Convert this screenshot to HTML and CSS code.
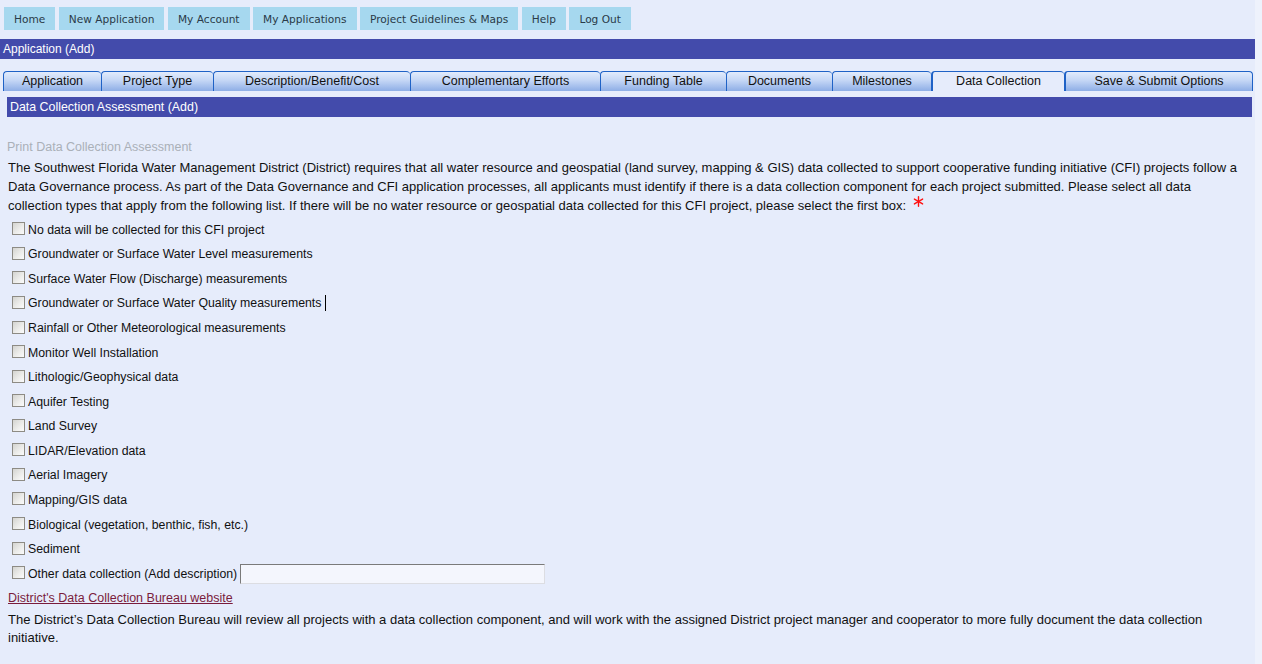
FILE: index.html
```html
<!DOCTYPE html>
<html lang="en">
<head>
  <meta charset="UTF-8">
  <title>Application (Add) – Data Collection</title>
  <link rel="stylesheet" href="styles.css">
</head>
<body>
  <div class="page">

    <nav class="topnav">
      <a href="#">Home</a>
      <a href="#">New Application</a>
      <a href="#">My Account</a>
      <a href="#">My Applications</a>
      <a href="#">Project Guidelines &amp; Maps</a>
      <a href="#">Help</a>
      <a href="#">Log Out</a>
    </nav>

    <div class="titlebar">Application (Add)</div>

    <ul class="tabs">
      <li class="t-app">Application</li>
      <li class="t-type">Project Type</li>
      <li class="t-desc">Description/Benefit/Cost</li>
      <li class="t-comp">Complementary Efforts</li>
      <li class="t-fund">Funding Table</li>
      <li class="t-docs">Documents</li>
      <li class="t-mile">Milestones</li>
      <li class="t-data active">Data Collection</li>
      <li class="t-save">Save &amp; Submit Options</li>
    </ul>

    <div class="content">
      <div class="subbar">Data Collection Assessment (Add)</div>

      <a class="print" href="#">Print Data Collection Assessment</a>

      <p class="intro">The Southwest Florida Water Management District (District) requires that all water resource and geospatial (land survey, mapping &amp; GIS) data collected to support cooperative funding initiative (CFI) projects follow a Data Governance process. As part of the Data Governance and CFI application processes, all applicants must identify if there is a data collection component for each project submitted. Please select all data collection types that apply from the following list. If there will be no water resource or geospatial data collected for this CFI project, please select the first box:
        <svg class="req" width="11" height="11" viewBox="0 0 11 11" aria-label="required">
          <g stroke="#ff1010" stroke-width="1.4" stroke-linecap="round">
            <line x1="5.5" y1="0.8" x2="5.5" y2="10.2"/>
            <line x1="1.4" y1="3.1" x2="9.6" y2="7.9"/>
            <line x1="1.4" y1="7.9" x2="9.6" y2="3.1"/>
          </g>
        </svg>
      </p>

      <div class="checklist">
        <label><input type="checkbox">No data will be collected for this CFI project</label>
        <label><input type="checkbox">Groundwater or Surface Water Level measurements</label>
        <label><input type="checkbox">Surface Water Flow (Discharge) measurements</label>
        <label><input type="checkbox">Groundwater or Surface Water Quality measurements <span class="caret"></span></label>
        <label><input type="checkbox">Rainfall or Other Meteorological measurements</label>
        <label><input type="checkbox">Monitor Well Installation</label>
        <label><input type="checkbox">Lithologic/Geophysical data</label>
        <label><input type="checkbox">Aquifer Testing</label>
        <label><input type="checkbox">Land Survey</label>
        <label><input type="checkbox">LIDAR/Elevation data</label>
        <label><input type="checkbox">Aerial Imagery</label>
        <label><input type="checkbox">Mapping/GIS data</label>
        <label><input type="checkbox">Biological (vegetation, benthic, fish, etc.)</label>
        <label><input type="checkbox">Sediment</label>
        <label class="other"><input type="checkbox">Other data collection (Add description) <input type="text" class="desc"></label>
      </div>

      <a class="bureau" href="#">District's Data Collection Bureau website</a>

      <p class="outro">The District’s Data Collection Bureau will review all projects with a data collection component, and will work with the assigned District project manager and cooperator to more fully document the data collection initiative.</p>
    </div>

  </div>
</body>
</html>
```

FILE: styles.css
```css
:root {
  --page-bg: #e6ecfb;
  --outer-bg: #eef2fc;
  --bar-color: #434bab;
  --nav-bg: #a6d8ef;
  --tab-border: #1f62c6;
  --text-color: #111;
}

body {
  margin: 0;
  padding: 0;
  background-color: var(--outer-bg);
  font-family: "Liberation Sans", Arial, sans-serif;
  font-size: 12px;
  color: var(--text-color);
}

.page {
  width: 1255px;
  min-height: 664px;
  background-color: var(--page-bg);
}

/* top navigation */
.topnav {
  display: flex;
  gap: 3.5px;
  padding: 7px 0 0 4px;
  height: 23px;
}

.topnav a {
  display: flex;
  align-items: center;
  padding: 0 10px;
  background-color: var(--nav-bg);
  color: #2a3a48;
  font-family: "DejaVu Sans", Verdana, sans-serif;
  font-size: 10.6px;
  text-decoration: none;
}

.titlebar {
  margin-top: 9px;
  height: 20px;
  line-height: 20px;
  padding-left: 3px;
  background-color: var(--bar-color);
  color: white;
}

/* tabs */
.tabs {
  display: flex;
  list-style: none;
  margin: 12px 0 0 3px;
  padding: 0;
  height: 20px;
}

.tabs li {
  box-sizing: border-box;
  height: 20px;
  line-height: 18px;
  text-align: center;
  font-size: 12.5px;
  border: 1px solid var(--tab-border);
  border-bottom: none;
  border-right: none;
  border-radius: 4px 4px 0 0;
  background: linear-gradient(to bottom, #e2ecfc 0%, #c4d6f5 45%, #8eaee6 100%);
  color: #111;
}

.tabs li.t-save { border-right: 1px solid var(--tab-border); }

.tabs li.active {
  background: var(--page-bg);
  border-left-width: 2px;
}

.tabs li.active + li { border-left-width: 2px; }

.t-app  { width: 98px; }
.t-type { width: 112px; }
.t-desc { width: 197px; }
.t-comp { width: 190px; }
.t-fund { width: 126px; }
.t-docs { width: 106px; }
.t-mile { width: 99px; }
.t-data { width: 133px; }
.t-save { width: 189px; }

/* main content */
.content {
  padding: 6px 3px 0 7px;
}

.subbar {
  height: 20px;
  line-height: 20px;
  padding-left: 3px;
  background-color: var(--bar-color);
  color: white;
  font-size: 12.4px;
}

.print {
  display: block;
  margin: 22px 0 0 0;
  color: #aab0b8;
  text-decoration: none;
  line-height: 16px;
  font-size: 12.5px;
}

.intro, .outro {
  margin: 4px 7px 0 1px;
  line-height: 18.5px;
  font-size: 13px;
}

.req {
  margin-left: 3px;
  vertical-align: 3px;
}

.checklist {
  display: flex;
  flex-direction: column;
  margin-top: 2px;
  padding-left: 5px;
}

.checklist label {
  display: flex;
  align-items: center;
  height: 24.57px;
  font-size: 12.3px;
}

.checklist input[type="checkbox"] {
  appearance: none;
  width: 13px;
  height: 13px;
  margin: 0 3px 2px 0;
  border: 1px solid #8d8b84;
  background: linear-gradient(135deg, #d4d4d0 0%, #eeeeec 60%, #fbfbfb 100%);
}

.caret {
  display: inline-block;
  width: 1px;
  height: 16px;
  margin-left: 4px;
  background: #000;
}

.desc {
  box-sizing: border-box;
  width: 305px;
  height: 20px;
  margin: 0 0 0 3px;
  border: 1px solid #dcdde2;
  border-top-color: #7a7a7a;
  border-left-color: #7a7a7a;
  background: #f4f6fd;
}

.bureau {
  display: block;
  margin: 4px 0 0 1px;
  color: #7a1c3c;
  line-height: 16px;
  font-size: 12.5px;
}

.outro {
  margin-top: 5px;
}
```
